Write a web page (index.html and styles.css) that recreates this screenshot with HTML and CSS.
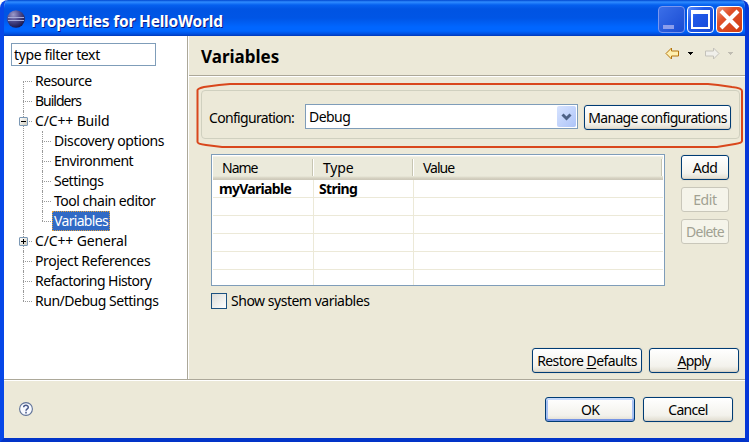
FILE: index.html
```html
<!DOCTYPE html>
<html lang="en">
<head>
<meta charset="utf-8">
<title>Properties for HelloWorld</title>
<link rel="stylesheet" href="styles.css">
</head>
<body>
<div class="window">
  <header class="titlebar">
    <svg class="logo" width="18" height="18" viewBox="0 0 18 18">
      <defs><radialGradient id="orb" cx=".35" cy=".25" r=".8"><stop offset="0" stop-color="#9d9bc9"/><stop offset=".45" stop-color="#514f92"/><stop offset="1" stop-color="#141348"/></radialGradient></defs>
      <circle cx="9" cy="9" r="8.8" fill="url(#orb)"/>
      <path d="M1 7.500h16M1 10.500h16" stroke="#a6abd8" stroke-width="1"/>
    </svg>
    <h1>Properties for HelloWorld</h1>
    <div class="controls">
      <span class="ctl min"><svg width="27" height="27"><path d="M5 19h11v4H5z" fill="#8c9deb"/></svg></span>
      <span class="ctl max"><svg width="27" height="27"><path d="M4 4h19v19H4zM6 8v13h15V8z" fill="#fff" fill-rule="evenodd"/></svg></span>
      <span class="ctl close"><svg width="27" height="27"><path d="M5 5l17 17M22 5L5 22" stroke="#fff" stroke-width="4"/></svg></span>
    </div>
  </header>
  <div class="body">
    <aside class="side">
      <div class="filter"><span class="t-filter">type filter text</span></div>
      <ul class="tree">
        <li><span class="t-resource">Resource</span></li>
        <li><span class="t-builders">Builders</span></li>
        <li class="parent"><i class="box"></i><span class="t-build">C/C++ Build</span>
          <ul>
            <li><span class="t-disc">Discovery options</span></li>
            <li><span class="t-env">Environment</span></li>
            <li><span class="t-set">Settings</span></li>
            <li><span class="t-tool">Tool chain editor</span></li>
            <li><span class="selected t-var">Variables</span></li>
          </ul>
        </li>
        <li class="parent"><i class="box plus"></i><span class="t-gen">C/C++ General</span></li>
        <li><span class="t-proj">Project References</span></li>
        <li><span class="t-ref">Refactoring History</span></li>
        <li><span class="t-run">Run/Debug Settings</span></li>
      </ul>
    </aside>
    <main class="page">
      <div class="head">
        <h2>Variables</h2>
        <svg class="nav" width="72" height="14" viewBox="0 0 72 14">
          <path d="M1 6.500L6.500 1v3h7v5h-7v3z" fill="#fff0b0" stroke="#b5740c"/>
          <path d="M23 5h5v1h-1v1h-1v1h-1V7h-1V6h-1z" fill="#000"/>
          <path d="M54 6.500L48.500 1v3h-8v5h8v3z" fill="#f0efea" stroke="#c4c2ba"/>
          <path d="M63 5h5v1h-1v1h-1v1h-1V7h-1V6h-1z" fill="#c0bdb2"/>
        </svg>
      </div>
      <div class="content">
        <section class="group">
          <label class="t-conf">Configuration:</label>
          <div class="combo"><span class="t-debug">Debug</span><i class="drop"><svg width="19" height="21"><path d="M5.500 8.500l4 4 4-4" fill="none" stroke="#4d6185" stroke-width="3"/></svg></i></div>
          <button class="manage"><span class="t-manage">Manage configurations</span></button>
        </section>
        <div class="middle">
          <table>
            <colgroup><col class="c1"><col class="c2"><col></colgroup>
            <thead><tr><th><span class="t-name">Name</span></th><th><span class="t-type">Type</span></th><th><span class="t-value">Value</span></th></tr></thead>
            <tbody>
              <tr><td><span class="t-my">myVariable</span></td><td><span class="t-string">String</span></td><td></td></tr>
              <tr><td></td><td></td><td></td></tr>
              <tr><td></td><td></td><td></td></tr>
              <tr><td></td><td></td><td></td></tr>
              <tr><td></td><td></td><td></td></tr>
              <tr class="last"><td></td><td></td><td></td></tr>
            </tbody>
          </table>
          <div class="actions">
            <button><span class="t-add">Add</span></button>
            <button disabled><span class="t-edit">Edit</span></button>
            <button disabled><span class="t-delete">Delete</span></button>
          </div>
        </div>
        <div class="check"><i></i><span class="t-show">Show system variables</span></div>
        <div class="apply-row">
          <button class="restore"><span class="t-restore">Restore <u>D</u>efaults</span></button>
          <button class="wide"><span class="t-apply"><u>A</u>pply</span></button>
        </div>
      </div>
    </main>
  </div>
  <footer>
    <svg width="14" height="14" viewBox="0 0 14 14"><circle cx="7" cy="7" r="6.400" fill="#f8faff" stroke="#5f7297" stroke-width="1.100"/><path d="M4.700 5.300C4.700 2.700 9.300 2.700 9.300 5.200 9.300 6.900 7 6.700 7 8.800M7 9.800v1.700" fill="none" stroke="#48598a" stroke-width="1.500"/></svg>
    <button class="wide default"><span class="t-ok">OK</span></button>
    <button class="wide"><span class="t-cancel">Cancel</span></button>
  </footer>
  <svg class="outline" width="749" height="80" viewBox="0 75 749 80"><path d="M197.500 90Q198 88.500 204 87L219 85 230 84H708L718 85 732 87Q742 88 742 91V141Q742 143 735 144L717 147H222L206 145Q197.500 144 197.500 142Z" fill="none" stroke="#d9471c" stroke-width="2"/></svg>
</div>
</body>
</html>
```
FILE: styles.css
```css
* { box-sizing: border-box; }
body { margin: 0; background: #fff; font: 14px/20px "Noto Sans", sans-serif; color: #000; }
h1, h2, ul { margin: 0; padding: 0; }
ul { list-style: none; }
span, label { white-space: nowrap; }
.window { position: relative; width: 749px; height: 442px; display: flex; flex-direction: column; border: 4px solid #0647e8; border-top: 0; border-color: #0647e8 #0537d8 #0234c8 #0647e8; border-radius: 8px 8px 0 0; background: #ece9d8; overflow: hidden; }
.window::after { content: ""; position: absolute; inset: 0 -4px -4px; border: solid #0019a8; border-width: 0 2px 2px 1px; pointer-events: none; }
.titlebar { flex: 0 0 36px; margin: 0 -4px; padding: 0 6px 0 7px; display: flex; align-items: flex-start; background: linear-gradient(#0046cf 0, #2f8cff 2px, #0560ef 5px, #0054e3 9px, #0055e5 18px, #0066ff 27px, #0066ff 31px, #0050e0 34px, #0038b8 36px); }
.logo { margin-top: 10px; }
h1 { margin: 10px 0 0 6px; font-size: 15.5px; line-height: 22px; color: #fff; text-shadow: 1px 1px #0a1883; white-space: nowrap; letter-spacing: -.2px; }
.controls { display: flex; gap: 2px; margin: 6px 0 0 auto; }
.ctl { width: 27px; height: 27px; border: 1px solid #fff; border-radius: 4px; background: linear-gradient(135deg, #5a8dff, #2058e8 35%, #1749d6); }
.ctl svg { display: block; margin: -1px; }
.min { border-color: #7b97ee; background: linear-gradient(135deg, #3b6fe8, #194bd3); }
.close { background: linear-gradient(135deg, #f0997c, #e0502a 35%, #cf3c11); }
.body { flex: 0 0 343px; display: flex; }
.side { width: 184px; background: #fff; border-right: 1px solid #aca899; padding: 7px 7px 0; }
.filter { width: 145px; height: 23px; border: 1px solid #7f9db9; padding: 1px 2px; }
.tree { margin-top: 5px; padding-left: 12px; }
.tree li { position: relative; padding-left: 12px; line-height: 20px; }
.tree li::before { content: ""; position: absolute; left: 0; top: 10px; width: 9px; border-top: 1px dotted #999; }
.tree li::after { content: ""; position: absolute; left: 0; top: 0; bottom: 0; border-left: 1px dotted #999; }
.tree > li:first-child::after { top: 10px; }
.tree li:last-child::after { bottom: auto; height: 10px; }
.tree ul { padding-left: 7px; }
.tree span { display: block; width: max-content; height: 20px; }
.tree .selected { margin-left: -2px; width: 58px; padding-left: 2px; background: #316ac5; color: #fff; outline: 1px dotted #e0a040; outline-offset: -1px; }
.box { position: absolute; z-index: 1; left: -4px; top: 6px; width: 9px; height: 9px; border: 1px solid #7b98b5; border-radius: 1px; background: linear-gradient(#000, #000) 1px 3px / 5px 1px no-repeat, linear-gradient(135deg, #fff, #d0cdc0); }
.plus { background: linear-gradient(#000, #000) 1px 3px / 5px 1px no-repeat, linear-gradient(#000, #000) 3px 1px / 1px 5px no-repeat, linear-gradient(135deg, #fff, #d0cdc0); }
.page { flex: 1; border-left: 1px solid #fff; display: flex; flex-direction: column; }
.head { height: 41px; padding: 0 8px 0 12px; border-bottom: 1px solid #fff; box-shadow: inset 0 -1px #aca899; display: flex; justify-content: space-between; align-items: flex-start; }
h2 { margin-top: 9px; font-size: 17px; line-height: 24px; }
.nav { margin-top: 11px; }
.content { flex: 1; padding: 13px 5px 0 12px; display: flex; flex-direction: column; }
.group { height: 49px; width: 539px; border: 1px solid #d0d0bf; border-radius: 4px; padding: 13px 7px 0; display: flex; align-items: flex-start; }
.group label { width: 96px; margin-top: 4px; }
.combo { width: 273px; height: 25px; border: 1px solid #7f9db9; background: #fff; padding: 1px; display: flex; justify-content: space-between; }
.combo span { padding: 1px 0 0 2px; }
.drop { width: 19px; height: 21px; border-radius: 2px; background: linear-gradient(135deg, #d8e4ff, #adc4f8); }
.drop svg { display: block; }
button { height: 25px; padding: 0; border: 1px solid #003c74; border-radius: 3px; background: linear-gradient(#fff, #f3f2ec 75%, #e0dccf); font: inherit; line-height: 20px; color: #000; box-shadow: 0 0 0 1px #e3e0d2, inset 0 -1px #d6d0c5; display: flex; justify-content: center; align-items: center; }
button:disabled { border-color: #c9c7ba; background: #f5f4ea; color: #a1a192; box-shadow: none; }
.manage { width: 147px; margin: 1px 0 0 6px; }
.middle { display: flex; margin: 15px 0 0 10px; gap: 16px; }
table { display: block; width: 454px; height: 132px; border: 1px solid #7f9db9; background: #fff; padding: 1px; border-spacing: 0; overflow: hidden; }
table, tr { color: #000; }
thead, tbody { display: block; }
tr { display: grid; grid-template-columns: 101px 100px 249px; height: 18px; }
thead tr { height: 24px; background: linear-gradient(#f4f2e8 0 1px, #ebeadb 1px 20px, #d6d2c2 22px, #cbc7b8); }
th { padding: 2px 0 0 9px; text-align: left; font-weight: 400; background: linear-gradient(90deg, #c7c5b2 50%, #fff 50%) 100% 3px / 2px 17px no-repeat; }
td { padding: 0 0 0 5px; font-weight: 700; line-height: 17px; border-right: 1px solid #ece9d8; border-bottom: 1px solid #ece9d8; }
td:last-child { border-right: 0; }
.last { height: 16px; }
.last td { border-bottom: 0; }
.actions { padding-top: 1px; display: grid; gap: 7px; align-content: start; }
.actions button { width: 48px; }
.check { display: flex; align-items: center; gap: 4px; margin: 5px 0 0 10px; height: 20px; }
.check i { width: 16px; height: 16px; border: 1px solid #1c5180; background: linear-gradient(135deg, #dcdcd7, #fff); }
.apply-row { display: flex; gap: 7px; margin: 37px 1px 0 auto; }
.restore { width: 110px; }
.wide { width: 90px; }
footer { flex: 1; border-top: 1px solid #aca899; box-shadow: inset 0 1px #fff; display: flex; gap: 8px; padding: 17px 12px 0 15px; margin-top: 0; }
footer svg { margin: 5px auto 0 0; }
.default { box-shadow: inset 0 2px #c5d9fb, inset 0 -2px #7594e3, inset 2px 0 #a6c0f3, inset -2px 0 #a6c0f3; }
.outline { position: absolute; left: -4px; top: 75px; pointer-events: none; }
u { text-underline-offset: 2px; text-decoration-thickness: 1px; text-decoration-skip-ink: none; }

/* per-label tracking */
.t-build, .t-gen, .t-type { letter-spacing: -.15px; }
.t-filter, .t-disc, .t-proj, .t-edit { letter-spacing: -.38px; }
.t-run, .t-resource, .t-env, .t-set, .t-tool, .t-show { letter-spacing: -.48px; }
.t-ref, .t-restore, .t-debug, .t-add { letter-spacing: -.56px; }
.t-conf, .t-manage, .t-var, .t-string, .t-cancel { letter-spacing: -.67px; }
.t-my { letter-spacing: -.7px; margin-left: 1px; }
.t-delete, .t-apply, .t-ok { letter-spacing: -.8px; }
.t-builders, .t-name, .t-value { letter-spacing: -1px; }
```
